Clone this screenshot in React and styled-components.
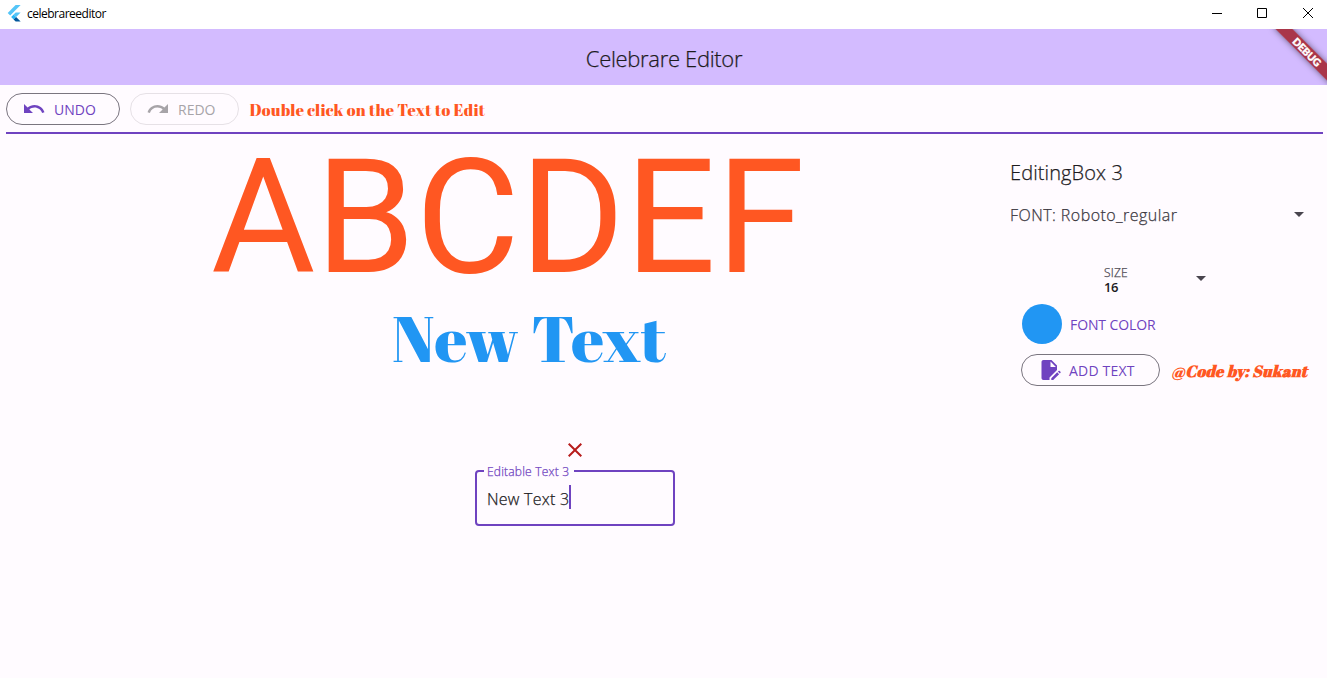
import React from "react";
import styled, { createGlobalStyle } from "styled-components";
import { MdUndo, MdRedo, MdArrowDropDown, MdClose } from "react-icons/md";

const purple = "#6f43c0";
const ink = "#1d1b1e";
const ui = `"Open Sans", "Noto Sans", sans-serif`;
const display = `"Abril Fatface", "Liberation Serif", serif`;

const GlobalStyle = createGlobalStyle`
  * { box-sizing: border-box; }
  body { margin: 0; background: #fffbff; font-family: ${ui}; color: ${ink}; overflow: hidden; }
`;

const Window = styled.div`
  width: 1327px;
  height: 678px;
  display: flex;
  flex-direction: column;
  background: #fffbff;
  overflow: hidden;
`;

const TitleBar = styled.header`
  height: 29px;
  flex: none;
  display: flex;
  align-items: center;
  padding: 0 3px 3px 7px;
  background: #fff;
`;

const WindowTitle = styled.span`
  flex: 1;
  margin: 2px 0 0 6px;
  font-size: 12px;
  line-height: 16px;
  letter-spacing: -0.5px;
  color: #000;
`;

const WindowControls = styled.div`
  display: flex;
  gap: 34px;
  padding-right: 10px;
  svg { display: block; }
`;

const AppBar = styled.div`
  position: relative;
  height: 56px;
  flex: none;
  display: flex;
  align-items: center;
  justify-content: center;
  padding: 1px 0 0 1px;
  background: #d3bbff;
  overflow: hidden;
`;

const Text = styled.span`
  font-family: ${(p) => p.$family || ui};
  font-size: ${(p) => p.$size}px;
  font-weight: ${(p) => p.$weight || 400};
  font-style: ${(p) => (p.$italic ? "italic" : "normal")};
  letter-spacing: ${(p) => p.$spacing || 0}px;
  line-height: ${(p) => p.$line || 20}px;
  color: ${(p) => p.$color || ink};
  white-space: nowrap;
`;

const LightText = styled(Text)`
  font-weight: 300;
  -webkit-text-stroke: 0.25px currentColor;
`;

const DebugBanner = styled.div`
  position: absolute;
  top: 17px;
  left: 1266px;
  width: 82px;
  height: 12px;
  transform: rotate(45deg);
  background: rgba(160, 24, 34, 0.82);
  box-shadow: 0 0 6px rgba(0, 0, 0, 0.5);
  color: #fff;
  font: 900 10.2px/12px Lato, sans-serif;
  -webkit-text-stroke: 0.4px #fff;
  text-align: center;
`;

const Toolbar = styled.div`
  height: 49px;
  flex: none;
  display: flex;
  align-items: flex-start;
  gap: 10px;
  margin: 0 4px 0 6px;
  padding-top: 8px;
  border-bottom: 2px solid ${purple};
`;

const OutlinedButton = styled.button`
  width: ${(p) => p.$width}px;
  height: 32px;
  flex: none;
  display: flex;
  align-items: center;
  gap: 8px;
  padding: 0 0 0 15px;
  border: 1px solid ${(p) => (p.disabled ? "#e6e1e6" : "#7a757f")};
  border-radius: 16px;
  background: transparent;
  color: ${(p) => (p.disabled ? "#a7a4a8" : purple)};
  svg { flex: none; }
  span { padding-top: 2px; }
`;

const Hint = styled.div`
  padding: 6px 0 0 0.5px;
`;

const Body = styled.main`
  flex: 1;
  display: flex;
`;

const Canvas = styled.section`
  position: relative;
  flex: none;
  width: 1000px;
`;

const CanvasItem = styled.div`
  position: absolute;
  left: ${(p) => p.$x}px;
  top: ${(p) => p.$y}px;
`;

const TextField = styled.div`
  position: relative;
  width: 200px;
  height: 56px;
  display: flex;
  align-items: center;
  padding-left: 10px;
  border: 2px solid ${purple};
  border-radius: 4px;
`;

const FieldLabel = styled.div`
  position: absolute;
  top: -8px;
  left: 7px;
  height: 16px;
  width: 90px;
  display: flex;
  padding-left: 3px;
  background: #fffbff;
`;

const FieldValue = styled.div`
  display: flex;
  padding-top: 1px;
`;

const Caret = styled.i`
  width: 2px;
  height: 24px;
  margin-top: -2px;
  background: ${purple};
`;

const Sidebar = styled.aside`
  flex: 1;
  min-width: 0;
  display: flex;
  flex-direction: column;
  padding: 27px 16px 0 10px;
`;

const FontSelect = styled.div`
  display: flex;
  justify-content: space-between;
  align-items: center;
  height: 24px;
  margin-top: 17px;
  span { padding-top: 2px; }
`;

const SizeSelect = styled.div`
  display: flex;
  justify-content: space-between;
  align-items: center;
  width: 109px;
  height: 28px;
  margin: 38px 0 0 94px;
`;

const SizeStack = styled.div`
  display: flex;
  flex-direction: column;
  padding-top: 4px;
`;

const ColorRow = styled.div`
  display: flex;
  align-items: center;
  gap: 8px;
  margin: 12px 0 10px 12px;
  span { padding-top: 1px; }
`;

const Swatch = styled.div`
  width: 40px;
  height: 40px;
  border-radius: 50%;
  background: #2196f3;
`;

const AddRow = styled.div`
  display: flex;
  align-items: center;
  gap: 11px;
  margin-left: 11px;
`;

const Credit = styled.div`
  padding-top: 1px;
`;

const FlutterLogo = () => (
  <svg width="14" height="17" viewBox="0 0 14 17">
    <path d="M8.6 0H13.6L3.2 10.4 0.7 7.9Z" fill="#54c5f8" />
    <path d="M8.6 7.6H13.6L9.1 12.1 6.6 9.6Z" fill="#54c5f8" />
    <path d="M6.6 9.6 9.1 12.1 6.6 14.6 4.1 12.1Z" fill="#29b6f6" />
    <path d="M6.6 14.6 9.1 12.1 13.6 16.5H8.6Z" fill="#01579b" />
  </svg>
);

const EditDocument = () => (
  <svg width="24" height="24" viewBox="0 0 24 24" fill="currentColor">
    <path d="M14.5 2H6.5c-1.1 0-2 .9-2 2v16c0 1.1.9 2 2 2h6v-2.6l7.5-7.5V7.5zM13.5 9V3.6L18.9 9z" />
    <path d="M14.3 20.2l5.9-5.9 1.9 1.9-5.9 5.8h-1.9zM20.9 13.6l.7-.7c.3-.3.7-.3 1 0l.9.9c.3.3.3.7 0 1l-.7.7z" />
  </svg>
);

export default function App() {
  return (
    <>
      <GlobalStyle />
      <Window>
        <TitleBar>
          <FlutterLogo />
          <WindowTitle>celebrareeditor</WindowTitle>
          <WindowControls>
            <svg width="12" height="12" viewBox="0 0 12 12"><path d="M2 6.5h10" stroke="#000" /></svg>
            <svg width="12" height="12" viewBox="0 0 12 12"><path d="M1.5 1.5h9v9h-9z" stroke="#000" fill="none" /></svg>
            <svg width="12" height="12" viewBox="0 0 12 12"><path d="M1 1l10 10M11 1L1 11" stroke="#000" /></svg>
          </WindowControls>
        </TitleBar>
        <AppBar>
          <LightText $size={22} $spacing={-0.32} $line={28}>Celebrare Editor</LightText>
          <DebugBanner>DEBUG</DebugBanner>
        </AppBar>
        <Toolbar>
          <OutlinedButton $width={114}>
            <MdUndo size={24} />
            <Text $size={14} $color="currentColor">UNDO</Text>
          </OutlinedButton>
          <OutlinedButton $width={109} disabled>
            <MdRedo size={24} />
            <Text $size={14} $color="currentColor">REDO</Text>
          </OutlinedButton>
          <Hint>
            <Text $family={display} $size={16} $spacing={0.25} $color="#ff5722">Double click on the Text to Edit</Text>
          </Hint>
        </Toolbar>
        <Body>
          <Canvas>
            <CanvasItem $x={211} $y={-10}>
              <Text as="div" $family="Roboto, sans-serif" $size={160} $line={188} $color="#ff5722" $spacing={0.2}>ABCDEF</Text>
            </CanvasItem>
            <CanvasItem $x={392} $y={171}>
              <Text as="div" $family={display} $size={64} $line={66} $spacing={0.25} $color="#2196f3">New Text</Text>
            </CanvasItem>
            <CanvasItem $x={563} $y={304}>
              <MdClose size={24} color="#b71c1c" />
            </CanvasItem>
            <CanvasItem $x={475} $y={336}>
              <TextField>
                <FieldLabel>
                  <LightText $size={12} $line={16} $spacing={0.2} $color={purple}>Editable Text 3</LightText>
                </FieldLabel>
                <FieldValue>
                  <LightText $size={16} $line={24} $spacing={0.25}>New Text 3</LightText>
                  <Caret />
                </FieldValue>
              </TextField>
            </CanvasItem>
          </Canvas>
          <Sidebar>
            <LightText $size={20} $line={24} $spacing={0.1}>EditingBox 3</LightText>
            <FontSelect>
              <LightText $size={16} $spacing={0.45} $line={24} $color="#3b383f">FONT: Roboto_regular</LightText>
              <MdArrowDropDown size={24} color="#49454e" />
            </FontSelect>
            <SizeSelect>
              <SizeStack>
                <LightText $size={12} $line={14} $spacing={0.2} $color="#49454e">SIZE</LightText>
                <Text $size={13} $line={14} $weight={600} $spacing={-0.5}>16</Text>
              </SizeStack>
              <MdArrowDropDown size={24} color="#49454e" />
            </SizeSelect>
            <ColorRow>
              <Swatch />
              <Text $size={14} $spacing={-0.1} $color={purple}>FONT COLOR</Text>
            </ColorRow>
            <AddRow>
              <OutlinedButton $width={139}>
                <EditDocument />
                <Text $size={14} $spacing={0.2} $color="currentColor">ADD TEXT</Text>
              </OutlinedButton>
              <Credit>
                <Text $family={display} $size={16} $spacing={0.25} $weight={700} $italic $color="#ff5722">@Code by: Sukant</Text>
              </Credit>
            </AddRow>
          </Sidebar>
        </Body>
      </Window>
    </>
  );
}
